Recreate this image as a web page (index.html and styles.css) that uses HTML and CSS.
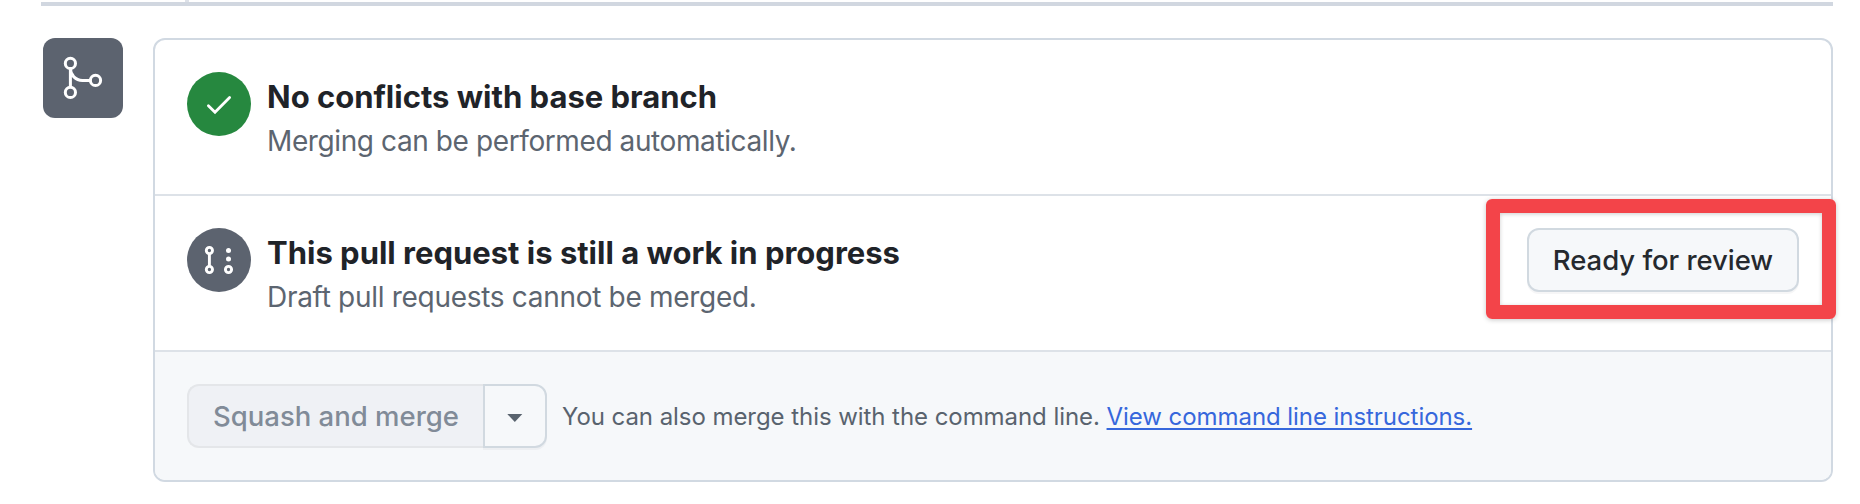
FILE: index.html
```html
<!DOCTYPE html>
<html lang="en">
<head>
<meta charset="utf-8">
<title>Merge pull request</title>
<link rel="stylesheet" href="styles.css">
</head>
<body>
<div class="timeline-end"><span class="timeline-stem"></span></div>
<main class="merge">
  <svg class="merge-badge" viewBox="0 0 80 80" aria-hidden="true">
    <g fill="none" stroke="#fff" stroke-width="3">
      <circle cx="27.4" cy="25.4" r="5.1"/>
      <circle cx="27.4" cy="54.4" r="5.1"/>
      <circle cx="52.5" cy="42.4" r="5.1"/>
      <path d="M27.4 30.5v18.8M27.4 30.5c0 6.5 5.2 11.9 12 11.9h8"/>
    </g>
  </svg>
  <section class="panel">
    <div class="row">
      <svg class="status status-ok" viewBox="0 0 64 64" aria-hidden="true">
        <path d="M21.4 33.8l6.6 6.5L42.6 25.6" fill="none" stroke="#fff" stroke-width="2.8" stroke-linecap="round"/>
      </svg>
      <div class="text">
        <h3 class="title">No conflicts with base branch</h3>
        <p class="sub s1">Merging can be performed automatically.</p>
      </div>
    </div>
    <div class="row">
      <svg class="status" viewBox="0 0 64 64" aria-hidden="true">
        <g fill="none" stroke="#fff" stroke-width="2.9">
          <circle cx="22.4" cy="22.5" r="3.1"/>
          <circle cx="22.4" cy="41.5" r="3.1"/>
          <circle cx="41.5" cy="41.5" r="3.1"/>
          <path d="M22.4 25.5v13"/>
        </g>
        <circle cx="41.5" cy="22.5" r="2.5" fill="#fff"/>
        <circle cx="41.5" cy="31" r="2.5" fill="#fff"/>
      </svg>
      <div class="text">
        <h3 class="title">This pull request is still a work in progress</h3>
        <p class="sub">Draft pull requests cannot be merged.</p>
      </div>
      <div class="action">
        <button class="btn ready">Ready for review</button>
        <span class="highlight"></span>
      </div>
    </div>
    <div class="row footer">
      <div class="group">
        <button class="btn squash" disabled>Squash and merge</button>
        <button class="btn caret" aria-label="Select merge method">
          <svg width="16" height="8" viewBox="0 0 16 8"><path d="M.3 0h15L7.8 8z" fill="#59636e"/></svg>
        </button>
      </div>
      <p class="note">You can also merge this with the command line. <a class="link" href="#">View command line instructions.</a></p>
    </div>
  </section>
</main>
</body>
</html>
```
FILE: styles.css
```css
* { box-sizing: border-box; }
body {
  margin: 0;
  padding: 0 27px 0 41px;
  background: #fff;
  color: #1f2328;
  font-family: Inter, "Liberation Sans", sans-serif;
  overflow: hidden;
}
.timeline-end { height: 6px; border-bottom: 4px solid #d1d7e0; padding-left: 144px; }
.timeline-stem { display: block; width: 4px; height: 2px; background: #dde1e8; }
.merge { display: flex; align-items: flex-start; gap: 30px; padding: 32px 0 0 2px; }
.merge-badge { flex: none; width: 80px; height: 80px; border-radius: 12px; background: #5c636f; }
.panel { flex: 1; height: 444px; border: 2px solid #d1d9e2; border-radius: 12px; }
.row { display: flex; align-items: flex-start; height: 156px; padding: 32px; border-bottom: 2px solid #dde2e8; }
.status { flex: none; width: 64px; height: 64px; border-radius: 50%; background: #5c636f; }
.status-ok { background: #26883f; }
.text { margin-left: 16px; flex: 1; white-space: nowrap; }
.title { margin: 0; padding-top: 2px; font-size: 31px; line-height: 46px; font-weight: 650; letter-spacing: 0; }
.sub { margin: 0; font-size: 28px; line-height: 42px; color: #5c6570; letter-spacing: -0.3px; }
.s1 { letter-spacing: -0.4px; }
.btn {
  height: 64px;
  padding: 0;
  border: 2px solid #d1d9e0;
  border-radius: 12px;
  background: #f6f8fa;
  color: #25292e;
  font: 500 27.5px/56px Inter, "Liberation Sans", sans-serif;
  white-space: nowrap;
  box-shadow: 0 2px 0 rgba(31, 35, 40, .04);
}
.action { position: relative; }
.ready { width: 272px; letter-spacing: -0.05px; }
.highlight {
  position: absolute;
  inset: -29px -37px -27px -41.5px;
  border: 14px solid #f34449;
  border-radius: 6px;
  box-shadow: 0 1px 5px rgba(0, 0, 0, .22), inset 0 1px 4px rgba(0, 0, 0, .2);
  pointer-events: none;
}
.footer { height: 128px; border-bottom: 0; background: #f6f8fa; border-radius: 0 0 10px 10px; }
.group { display: flex; }
.squash {
  width: 296px;
  border-color: #e4e6e9;
  border-right: 0;
  border-radius: 12px 0 0 12px;
  background: #eff1f5;
  color: #818b98;
  letter-spacing: 0;
  box-shadow: none;
}
.caret { display: flex; align-items: center; justify-content: center; width: 64px; padding-top: 4px; border-radius: 0 12px 12px 0; }
.note { margin: 0 0 0 15px; padding-top: 1px; font-size: 24px; line-height: 64px; letter-spacing: -0.06px; color: #59636e; white-space: nowrap; }
.link { color: #3667dc; text-decoration: underline; text-decoration-thickness: 2px; text-underline-offset: 3px; }
```
